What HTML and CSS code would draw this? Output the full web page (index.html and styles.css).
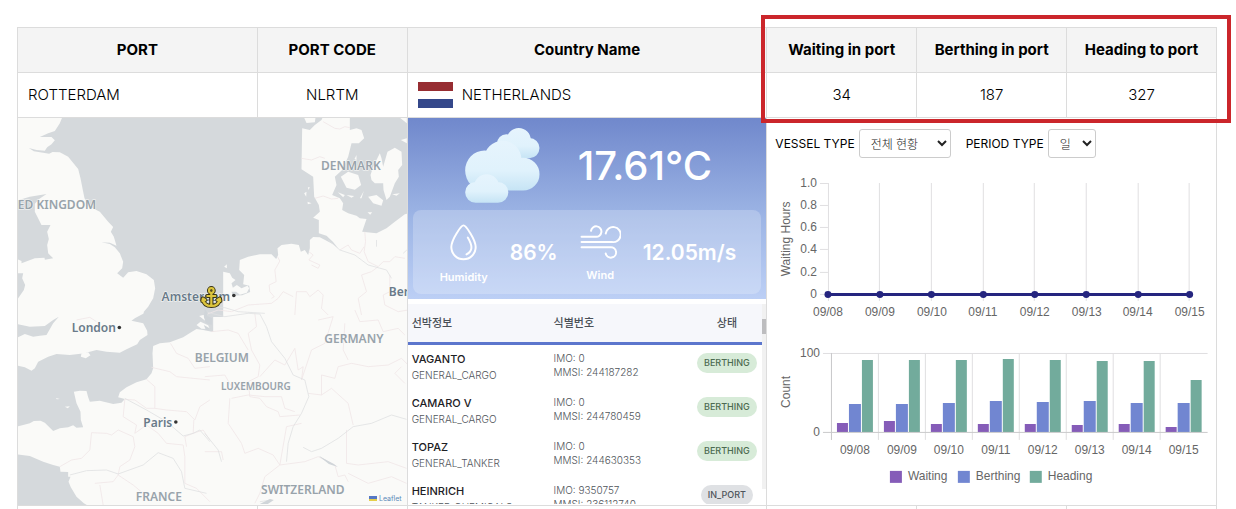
FILE: index.html
```html
<!DOCTYPE html>
<html lang="ko">
<head>
<meta charset="utf-8">
<title>Port status</title>
<link rel="stylesheet" href="styles.css">
</head>
<body>
<main class="board">
<div class="highlight"></div>
<table class="port-table">
<colgroup><col class="c-port"><col class="c-code"><col class="c-country"><col class="c-count"><col class="c-count"><col class="c-count"></colgroup>
<thead>
<tr><th>PORT</th><th>PORT CODE</th><th>Country Name</th><th>Waiting in port</th><th>Berthing in port</th><th>Heading to port</th></tr>
</thead>
<tbody>
<tr class="summary">
<td class="left">ROTTERDAM</td><td>NLRTM</td>
<td class="left"><div class="country"><span class="flag"></span>NETHERLANDS</div></td>
<td>34</td><td>187</td><td>327</td>
</tr>
<tr class="detail">
<td colspan="2">
<div class="map">
<svg class="map-svg" viewBox="18 118 389 387" preserveAspectRatio="xMidYMid slice" role="img" aria-label="Map">
<rect x="18" y="118" width="389" height="387" fill="#fafaf8"/>
<g fill="#d5d9dc">
<path transform="translate(10 115) scale(.33333)" d="M160 0L150 25L135 48L115 55L90 66L125 66L135 76L125 88L112 97L105 107L80 105L57 99L72 109L100 113L118 116L128 111L150 112L175 125L205 162L212 190L220 230L224 250L240 275L270 290L295 320L310 336L303 350L312 365L320 392L300 383L275 382L300 387L315 397L330 415L340 440L337 460L322 475L340 488L355 472L380 468L410 478L432 495L436 520L430 550L415 575L402 590L400 606L640 606V0Z"/>
<path transform="translate(10 115) scale(.33333)" d="M20 257L60 245L110 237L88 252L75 266L75 290L95 330L122 330L112 350L117 372L112 390L115 415L130 430L105 434L104 428L75 430L35 445L35 438L20 432ZM20 475L40 475L37 490L46 510L42 525L25 550L20 555Z"/>
<path transform="translate(10 310) scale(.33333)" d="M20 42L60 50L105 48L130 30L147 20L130 40L110 75L90 77L70 80L45 72L20 84ZM403 10L375 25L365 32L400 40L412 62L413 75L390 90L382 103L350 118L330 128L290 125L260 120L240 125L225 130L180 135L140 132L115 140L85 155L75 175L65 182L45 172L20 166V350L40 345L60 340L72 333L92 332L105 338L130 363L150 355L175 352L190 346L200 353L220 352L213 330L212 305L200 280L192 245L210 242L230 243L235 262L240 275L270 272L310 282L335 278L345 267L325 262L330 247L350 232L380 217L410 208L425 190L430 175L428 130L430 108L450 100L480 97L520 82L545 66L560 57L580 60L610 66V10ZM20 433L60 438L100 455L130 465L150 470L152 485L175 486L175 500L182 500L176 515L183 532L200 560L222 580L240 590H20Z"/>
<path transform="translate(205 115) scale(.33333)" d="M-10 0V605L5 585L15 560L40 530L50 490L55 470L75 475L82 488L92 495L80 505L84 518L96 510L110 520L128 512L133 520L126 533L105 539L94 530L80 530L84 542L112 541L136 531L133 512L115 508L118 480L103 465L105 435L130 425L165 418L200 418L214 432L220 420L218 400L230 390L260 386L282 390L288 410L300 405L310 420L315 400L315 375L325 366L345 367L385 388L400 400L384 380L365 362L342 355L342 315L325 308L345 290L342 270L328 245L325 185L290 163L292 40L315 45L330 30L350 15L357 0ZM435 0L435 45L455 40L470 45L478 70L462 85L440 85L430 125L412 165L390 185L395 210L382 240L405 250L415 265L412 285L430 295L455 302L465 310L485 312L472 350L515 355L545 340L570 320L600 298L610 295V0Z"/>
</g>
<g fill="#fafaf8">
<path transform="translate(205 115) scale(.33333)" d="M298 8L332 8L330 22L305 24ZM408 185L430 170L460 180L469 210L450 224L425 218ZM497 180L505 155L525 115L530 130L535 155L548 110L570 98L590 110L592 150L580 165L582 185L570 205L555 245L545 255L536 225L535 205L510 205L500 195ZM490 245L515 240L535 256L530 272L505 265ZM399 232L420 240L415 247ZM425 240L448 243L440 248ZM465 250L477 228L470 250ZM488 292L502 292L496 299ZM562 238L585 235L575 242ZM588 75L606 70V85ZM455 120L455 135L449 132ZM58 455L66 448L66 460ZM298 235L305 230L304 245ZM309 217L315 217L311 225ZM308 260L320 265L309 268ZM585 8L606 25V8Z"/>
<path transform="translate(10 310) scale(.33333)" d="M215 130L235 127L242 136L228 145L213 140ZM560 45L572 35L595 46L600 57L575 56ZM568 18L580 15L600 30L590 35ZM165 290L180 289L174 295ZM138 264L150 267L141 268Z"/>
</g>
<g fill="none" stroke="#f0e6e7" stroke-width="2.4" stroke-linejoin="round">
<path transform="translate(205 115) scale(.33333)" d="M218 425L225 438L210 465L214 500L193 510L195 530L208 545L200 550M290 130L320 135L345 125L360 130M330 250L355 243L380 252L400 250M355 20L390 40L405 42L420 35L435 38M480 350L482 380L478 410L490 440L520 455L535 440L555 440L570 425L600 430M520 455L500 470L470 480L485 530L460 550L470 600M312 410L325 420L312 435L345 450L340 460L320 450M270 600L275 530L305 530L315 545L340 525L355 540L350 580L370 600M405 405L430 390L440 405L465 415L478 395M0 600L40 585L80 590L130 570L200 565L220 550L235 530L265 545M555 480L555 530L535 540L540 570L580 590L610 585"/>
<path transform="translate(205 310) scale(.33333)" d="M150 10L155 50L130 70L140 120L165 165L160 200L130 215L135 260L165 265L185 290L220 305L225 320L285 315M130 120L100 70L70 60L20 65M0 200L60 195L80 230L130 240M165 200L210 150L240 165L270 115L280 180L295 170L290 210L320 120L360 100L385 20L340 30M75 265L70 340L110 400L120 430L160 415L205 435L225 465L300 455L340 440L390 465L400 500L420 495L430 515M310 250L350 255L350 195L390 205L400 170L440 160L490 170L550 165L590 145L610 165M420 40L415 120L430 150M350 255L380 235L430 280L445 345M425 360L425 460L460 465L550 455L605 475M290 340L245 350L225 465L180 500L165 550L150 580M0 425L50 425L55 450M430 490L490 520L560 500L605 520M450 0L465 35L520 30L535 65L580 55L600 75M590 170L570 190L600 220M80 265L130 255L180 260L230 260L240 295L270 305"/>
<path transform="translate(10 310) scale(.33333)" d="M425 172L480 185L500 200L550 205L600 210M410 208L435 230L435 295L470 300L530 305L555 330L570 290L600 270M482 100L500 130L535 145L555 175L600 170M345 268L375 270L410 295L435 295M345 268L340 320L380 345L375 370L410 345L445 370L470 400L520 405L525 440M245 368L290 370L305 375L325 360L370 380L375 410L360 450L330 470L325 495M245 368L240 420L215 445L185 450L150 470M325 495L370 525L400 550M255 520L310 515L325 495M270 525L280 585M525 440L525 520L560 535L600 575M552 330L550 370L525 380L530 410M550 370L580 360L600 390M200 30L240 22L260 35"/>
</g>
<g fill="none" stroke="#dfe1e2" stroke-width="2.4" stroke-linejoin="round">
<path transform="translate(205 115) scale(.33333)" d="M370 375L405 405L450 420L490 450L545 465L560 490M515 375V395M595 415L606 405M0 578L60 578L100 590L180 595"/>
<path transform="translate(205 310) scale(.33333)" d="M0 5L60 20L130 10L165 12L185 50L200 95L240 145L265 195L300 210L312 260L290 310L265 350L250 400L245 455M605 328L560 315L500 340L445 350L400 385L350 415L320 425L295 412M345 440L385 465M0 370L40 420L50 455M165 575L200 570"/>
<path transform="translate(10 310) scale(.33333)" d="M180 495L230 482L290 480L325 492L400 465L445 428L490 445L515 485L525 535L590 550M345 265L410 300L470 335L520 378L550 370L570 360L600 395"/>
</g>
<path fill="#d0d5d9" d="M319 456l15 8 4 3-9-3zM260 504l10-5 4 1-6 4zM205 309l3 4-1 3 5 2v7l-6-2-2-6zM204 325l7 4-5 1z"/>
<g class="map-label" text-anchor="middle">
<text x="18" y="209" text-anchor="start">ED KINGDOM</text>
<text x="351" y="170">DENMARK</text>
<text x="222" y="362">BELGIUM</text>
<text class="small-label" x="256" y="390">LUXEMBOURG</text>
<text x="354" y="343">GERMANY</text>
<text x="159" y="501">FRANCE</text>
<text x="303" y="494">SWITZERLAND</text>
<g class="city">
<text x="94" y="332">London</text>
<text x="158" y="427">Paris</text>
<text x="196" y="301">Amsterdam</text>
<text x="389" y="296" text-anchor="start">Ber</text>
</g>
</g>
<g fill="#333"><circle cx="119.500" cy="327.500" r="1.800"/><circle cx="176" cy="422" r="1.800"/><circle cx="234" cy="295.500" r="1.800"/></g>
<g fill="none" stroke-linecap="round" stroke-linejoin="round">
<g stroke="#3a3414" stroke-width="4.200"><circle cx="211.500" cy="290.500" r="2.300"/><path d="M211.500 293V305M207.500 296H215.500M203 299Q204 306 211.500 306Q219 306 220 299M202.500 301L203 298.500L205.500 300M220.500 301L220 298.500L217.500 300"/></g>
<g stroke="#dcc53e" stroke-width="2.200"><circle cx="211.500" cy="290.500" r="2.300"/><path d="M211.500 293V305M207.500 296H215.500M203 299Q204 306 211.500 306Q219 306 220 299M202.500 301L203 298.500L205.500 300M220.500 301L220 298.500L217.500 300"/></g>
</g>
</svg>
<a class="attribution" href="#"><span class="ua"></span>Leaflet</a>
</div>
</td>
<td>
<div class="side">
<section class="weather">
<div class="now">
<svg class="cloud" viewBox="180 38 223 224" aria-hidden="true">
<defs><linearGradient id="cl" x1="0" y1="0" x2="0" y2="1"><stop offset="0" stop-color="#e6f4fd"/><stop offset=".6" stop-color="#e0f2fc"/><stop offset="1" stop-color="#c6e4f5"/></linearGradient></defs>
<path fill="url(#cl)" d="M304 74a36 36 0 0 1 72 0a36 36 0 0 1-72 0zM342 98a30 30 0 0 1 60 0a30 30 0 0 1-60 0zM275 85a28 28 0 0 1 56 0a28 28 0 0 1-56 0zM303 70H372V128H303z"/>
<path fill="url(#cl)" d="M180 165a58 60 0 0 1 116 0a58 60 0 0 1-116 0zM236 132a56 56 0 0 1 112 0a56 56 0 0 1-112 0zM304 176a49 49 0 0 1 98 0a49 49 0 0 1-98 0zM238 150H354V225H238z"/>
<path fill="url(#cl)" d="M180 230a31 31 0 0 1 62 0a31 31 0 0 1-62 0zM206 214a38 38 0 0 1 76 0a38 38 0 0 1-76 0zM247 230a31 31 0 0 1 62 0a31 31 0 0 1-62 0zM210 214H279V261H210z"/>
</svg>
<span class="temp">17.61°C</span>
</div>
<div class="metrics">
<div class="metric"><svg class="drop" viewBox="136 328 82 112" aria-hidden="true"><g fill="none" stroke="#fff" stroke-width="6" stroke-linecap="round"><path d="M177 332C170 332 140 375 140 398A37 37 0 0 0 214 398C214 375 184 332 177 332Z"/><path d="M190 369Q202 389 201 401Q200 413 186 420"/></g></svg><span>Humidity</span></div>
<strong>86%</strong>
<div class="metric"><svg class="wind" viewBox="523 320 124 104" aria-hidden="true"><g fill="none" stroke="#fff" stroke-width="6" stroke-linecap="round"><path d="M527 356H570A16 16 0 1 0 556 338M527 372H620A23 23 0 1 0 601 346M527 388H615A16 16 0 1 1 601 407"/></g></svg><span>Wind</span></div>
<strong>12.05m/s</strong>
</div>
</section>
<section class="ships">
<table class="ship-table">
<thead><tr><th>선박정보</th><th>식별번호</th><th class="state">상태</th></tr></thead>
<tbody>
<tr><td><b>VAGANTO</b><span>GENERAL_CARGO</span></td><td class="ids">IMO: 0<br>MMSI: 244187282</td><td class="state"><em>BERTHING</em></td></tr>
<tr><td><b>CAMARO V</b><span>GENERAL_CARGO</span></td><td class="ids">IMO: 0<br>MMSI: 244780459</td><td class="state"><em>BERTHING</em></td></tr>
<tr><td><b>TOPAZ</b><span>GENERAL_TANKER</span></td><td class="ids">IMO: 0<br>MMSI: 244630353</td><td class="state"><em>BERTHING</em></td></tr>
<tr><td><b>HEINRICH</b><span>TANKER_CHEMICALS</span></td><td class="ids">IMO: 9350757<br>MMSI: 236112740</td><td class="state"><em class="in-port">IN_PORT</em></td></tr>
</tbody>
</table>
<div class="scrollbar"><div class="thumb"></div></div>
</section>
</div>
</td>
<td colspan="3">
<div class="stats">
<form class="filters">
<label for="vessel">VESSEL TYPE</label><select id="vessel" class="vessel"><option>전체 현황</option></select>
<label for="period" class="second">PERIOD TYPE</label><select id="period" class="period"><option>일</option></select>
</form>
<svg class="chart" viewBox="767 168 449 165" role="img" aria-label="Waiting hours">
<path class="grid" d="M828.500 183V301M879.500 183V301M931.500 183V301M983.500 183V301M1034.500 183V301M1086.500 183V301M1138.500 183V301M1189.500 183V301M820 183.500H828M820 205.500H828M820 227.500H828M820 249.500H828M820 272.500H828M820 294.500H828"/>
<path stroke="#25257f" stroke-width="3" d="M828 294.500H1190"/>
<g fill="#25257f"><circle cx="828" cy="294.500" r="3.500"/><circle cx="880" cy="294.500" r="3.500"/><circle cx="931.500" cy="294.500" r="3.500"/><circle cx="983.500" cy="294.500" r="3.500"/><circle cx="1035" cy="294.500" r="3.500"/><circle cx="1086.500" cy="294.500" r="3.500"/><circle cx="1138.500" cy="294.500" r="3.500"/><circle cx="1190" cy="294.500" r="3.500"/></g>
<g text-anchor="end"><text x="817" y="187">1.0</text><text x="817" y="209">0.8</text><text x="817" y="231">0.6</text><text x="817" y="253">0.4</text><text x="817" y="276">0.2</text><text x="817" y="298">0</text></g>
<g text-anchor="middle"><text x="828" y="316">09/08</text><text x="880" y="316">09/09</text><text x="932" y="316">09/10</text><text x="983" y="316">09/11</text><text x="1035" y="316">09/12</text><text x="1087" y="316">09/13</text><text x="1138" y="316">09/14</text><text x="1190" y="316">09/15</text>
<text transform="translate(790 239) rotate(-90)">Waiting Hours</text></g>
</svg>
<svg class="chart" viewBox="767 333 449 165" role="img" aria-label="Vessel count">
<path class="grid" d="M823 353.500H1208M831.500 353V440M878.500 353V440M925.500 353V440M972.500 353V440M1019.500 353V440M1066.500 353V440M1113.500 353V440M1160.500 353V440"/>
<path fill="#855cb8" d="M837 432V423h11v9zM884 432V421h11v11zM931 432V424h11v8zM978 432V424h11v8zM1025 432V424h11v8zM1072 432V425h11v7zM1119 432V424h11v8zM1166 432V427h11v5z"/>
<path fill="#7186d1" d="M849 432V404h12v28zM896 432V404h12v28zM943 432V403h12v29zM990 432V401h12v31zM1037 432V402h12v30zM1084 432V401h12v31zM1131 432V403h12v29zM1178 432V403h12v29z"/>
<path fill="#72ab9c" d="M862 432V360h11v72zM909 432V360h11v72zM956 432V360h11v72zM1003 432V359h11v73zM1050 432V360h11v72zM1097 432V361h11v71zM1144 432V361h11v71zM1191 432V380h11v52z"/>
<path class="axis" d="M823 432.500H1208M831.500 353V440"/>
<g text-anchor="end"><text x="820" y="357">100</text><text x="820" y="436">0</text></g>
<g text-anchor="middle"><text x="855" y="454">09/08</text><text x="902" y="454">09/09</text><text x="949" y="454">09/10</text><text x="996" y="454">09/11</text><text x="1043" y="454">09/12</text><text x="1090" y="454">09/13</text><text x="1137" y="454">09/14</text><text x="1184" y="454">09/15</text>
<text transform="translate(790 392) rotate(-90)">Count</text></g>
<path fill="#855cb8" d="M890 471h12v12h-12z"/><path fill="#7186d1" d="M958 471h12v12h-12z"/><path fill="#72ab9c" d="M1030 471h12v12h-12z"/>
<text x="908" y="480">Waiting</text><text x="976" y="480">Berthing</text><text x="1048" y="480">Heading</text>
</svg>
</div>
</td>
</tr>
<tr class="next"><td></td><td></td><td></td><td></td><td></td><td></td></tr>
</tbody>
</table>
</main>
</body>
</html>
```
FILE: styles.css
```css
* { box-sizing: border-box; }
body {
  margin: 0;
  background: #fff;
  color: #000;
  font-family: Inter, "Noto Sans CJK KR", sans-serif;
  overflow: hidden;
}
.board { position: relative; margin: 27px 19px 0 17px; }
.highlight {
  position: absolute;
  left: calc(62.5% - 6px);
  right: -14px;
  top: -12px;
  height: 108px;
  border: 4px solid #cb262b;
  pointer-events: none;
}
.port-table { width: 100%; border-collapse: collapse; table-layout: fixed; font-size: 15px; }
.c-port { width: 20%; }
.c-code, .c-count { width: 12.5%; }
.c-country { width: 30%; }
.port-table > thead th, .port-table > tbody > tr > td { border: 1px solid #dcdcdc; padding: 0; }
.port-table > thead th { height: 45px; padding-bottom: 2px; background: #f4f4f4; font-weight: 700; }
.port-table > tbody > .summary > td { height: 45px; padding-bottom: 1px; font-weight: 300; text-align: center; }
.port-table > tbody > .summary > .left { padding-left: 10px; text-align: left; }
.detail > td { vertical-align: top; }
.next td { height: 4px; }
.country { display: flex; align-items: center; gap: 9px; }
.flag {
  width: 35px;
  height: 26px;
  background: linear-gradient(#972d32 0 33%, #fff 33% 66%, #34478a 66%);
}

.map { position: relative; height: 387px; overflow: hidden; }
.map-svg { display: block; width: 100%; height: 100%; }
.map-label {
  font: 600 12px "Noto Sans", sans-serif;
  fill: #98a3ab;
  stroke: #fafaf8;
  stroke-width: 1px;
  paint-order: stroke;
}
.map-label .small-label { font-size: 10px; }
.city { fill: #697a8a; }
.attribution {
  position: absolute;
  right: 5px;
  bottom: 2px;
  display: flex;
  align-items: center;
  gap: 2px;
  color: #5b8bb8;
  font: 7px Inter, sans-serif;
  text-decoration: none;
}
.ua { width: 8px; height: 5px; background: linear-gradient(#5577c4 50%, #e5cf4a 50%); }

.side { height: 387px; overflow: hidden; }
.weather {
  height: 181px;
  padding: 0 5px 5px;
  display: flex;
  flex-direction: column;
  background: linear-gradient(#7088cc, #9db5e5 55%, #bccff5);
  color: #fff;
}
.now { flex: 1; display: flex; align-items: center; gap: 38px; padding: 2px 0 0 52px; }
.cloud { width: 75px; height: 75px; }
.temp { font-size: 40px; font-weight: 500; }
.metrics {
  height: 84px;
  display: flex;
  align-items: center;
  gap: 22px;
  padding-left: 27px;
  border-radius: 8px;
  background: rgba(255, 255, 255, .22);
}
.metrics strong { font-size: 21px; font-weight: 600; }
.metric { display: flex; flex-direction: column; align-items: center; gap: 9px; padding-top: 3px; font-size: 11px; font-weight: 600; line-height: 14px; }
.drop { width: 27px; height: 37px; }
.wind { width: 41px; height: 34px; }

.ships { display: flex; height: 205px; padding-top: 5px; overflow: hidden; }
.ship-table { flex: 1; height: max-content; border-collapse: collapse; table-layout: fixed; }
.ship-table th {
  width: 40%;
  height: 39px;
  padding: 0 4px 2px;
  background: #f6f7fb;
  border-bottom: 3px solid #5c76cd;
  color: #4a5057;
  font-size: 11px;
  font-weight: 500;
  text-align: left;
}
.ship-table th.state { width: 20%; }
.ship-table .state { text-align: center; }
.ship-table td { height: 44px; padding: 6px 4px; vertical-align: top; font-size: 10px; font-weight: 300; line-height: 16px; color: #50555b; }
.ship-table b { display: block; color: #1c2024; font-size: 11px; font-weight: 500; }
.ship-table span { display: block; white-space: nowrap; }
.ship-table td.ids { line-height: 14px; }
.ship-table td.state { padding: 8px 4px; line-height: 15px; }
.ship-table em {
  display: inline-block;
  padding: 0 7px;
  border-radius: 10px;
  background: #d7ebd8;
  color: #4c6a50;
  font-size: 9px;
  font-style: normal;
  font-weight: 500;
  line-height: 20px;
}
.ship-table em.in-port { background: #dfe1e4; color: #4e545b; }
.scrollbar { width: 4px; height: 185px; padding-top: 15px; background: #f1f1f1; }
.thumb { height: 15px; background: #bdbdbf; }

.stats { padding-top: 11px; }
.filters { display: flex; align-items: center; height: 29px; margin: 0 0 10px; padding-left: 8px; font-size: 12px; }
.filters select {
  height: 29px;
  margin-left: 4px;
  padding: 0 0 0 7px;
  border: 1px solid #ccc;
  border-radius: 3px;
  background: #fff;
  color: #222;
  font: 300 12px "Noto Sans CJK KR", sans-serif;
}
.vessel { width: 92px; }
.period { width: 48px; }
.second { margin-left: 15px; }
.chart { display: block; width: 100%; height: auto; }
.chart text { font: 12px "Liberation Sans", Arial, sans-serif; fill: #666; }
.grid { fill: none; stroke: #e0dfe1; }
.axis { fill: none; stroke: #c9c9cb; }
```
